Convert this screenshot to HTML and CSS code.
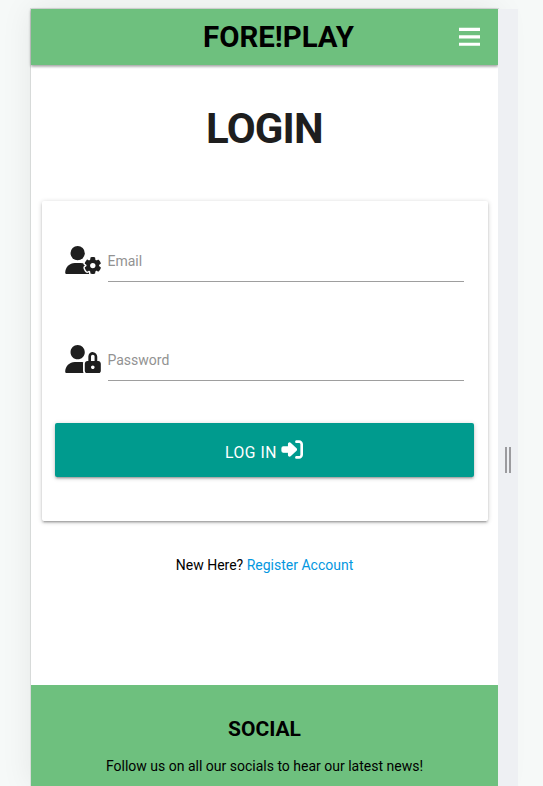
FILE: index.html
```html
<!DOCTYPE html>
<html lang="en">
<head>
<meta charset="utf-8">
<title>FORE!PLAY</title>
<link rel="stylesheet" href="styles.css">
</head>
<body>
<div class="device">
  <div class="screen">
    <header class="navbar">
      <span class="brand">FORE!PLAY</span>
      <svg class="menu" viewBox="0 0 448 512"><path d="M0 61h448v66H0zM0 220h448v66H0zM0 379h448v66H0z"/></svg>
    </header>
    <main>
      <h1>LOGIN</h1>
      <form class="card">
        <label class="field">
          <svg class="icon" viewBox="0 0 640 512">
            <circle cx="224" cy="128" r="128"/>
            <path d="M274.7 304H173.3C77.6 304 0 381.7 0 477.4 0 496.5 15.5 512 34.7 512H413c12 0 22-4 29-12V400L360 325C335 311 305 304 274.7 304z"/>
            <path class="gear" transform="translate(16)" d="M436 218.2c0-7 4.5-13.3 11.3-14.8c10.5-2.4 21.5-3.7 32.7-3.7s22.2 1.3 32.7 3.7c6.8 1.5 11.3 7.8 11.3 14.8v17.7c0 7.8 4.8 14.8 11.6 18.7c6.8 3.9 15.1 4.5 21.8 .6l13.8-7.9c6.1-3.5 13.7-2.7 18.5 2.4c7.6 8.1 14.3 17.2 20.1 27.2s10.3 20.4 13.5 31c2.1 6.7-1.1 13.7-7.2 17.2l-14.4 8.3c-6.5 3.7-10 10.9-10 18.4s3.5 14.7 10 18.4l14.4 8.3c6.1 3.5 9.2 10.5 7.2 17.2c-3.3 10.6-7.8 21-13.5 31s-12.5 19.1-20.1 27.2c-4.8 5.1-12.5 5.9-18.5 2.4l-13.8-7.9c-6.7-3.9-15.1-3.3-21.8 .6c-6.8 3.9-11.6 10.9-11.6 18.7v17.7c0 7-4.5 13.3-11.3 14.8c-10.5 2.4-21.5 3.7-32.7 3.7s-22.2-1.3-32.7-3.7c-6.8-1.5-11.3-7.8-11.3-14.8V467.3c0-7.8-4.8-14.8-11.6-18.7c-6.7-3.9-15.1-4.5-21.8-.6l-13.8 7.9c-6.1 3.5-13.7 2.7-18.5-2.4c-7.6-8.1-14.3-17.2-20.1-27.2s-10.3-20.4-13.5-31c-2.1-6.7 1.1-13.7 7.2-17.2l14.4-8.3c6.5-3.7 10-10.9 10-18.4s-3.5-14.7-10-18.4l-14.4-8.3c-6.1-3.5-9.2-10.5-7.2-17.2c3.3-10.6 7.7-21 13.5-31s12.5-19.1 20.1-27.2c4.8-5.1 12.4-5.9 18.5-2.4l13.8 7.9c6.8 3.9 15.1 3.3 21.8-.6c6.8-3.9 11.6-10.9 11.6-18.7V218.2z"/>
            <circle class="hole" cx="496" cy="352" r="48"/>
          </svg>
          <input type="text" placeholder="Email">
        </label>
        <label class="field">
          <svg class="icon" viewBox="0 0 640 512"><path d="M592 288H576V212.7c0-41.8-30.1-80.2-71.6-84.4C456.5 123.6 416 161.1 416 208V288h-16C373.6 288 352 309.6 352 336v128c0 26.4 21.6 48 48 48h192c26.4 0 48-21.6 48-48v-128C640 309.6 618.4 288 592 288zM496 432c-17.62 0-32-14.38-32-32s14.38-32 32-32s32 14.38 32 32S513.6 432 496 432zM528 288h-64V208c0-17.62 14.38-32 32-32s32 14.38 32 32V288z"/><path d="M224 256c70.7 0 128-57.31 128-128S294.7 0 224 0S96 57.31 96 128S153.3 256 224 256zM320 336c0-8.672 1.738-16.87 4.303-24.7C308.6 306.6 291.9 304 274.7 304H173.3C77.61 304 0 381.7 0 477.4C0 496.5 15.52 512 34.66 512h301.7C326.3 498.6 320 482.1 320 464V336z"/></svg>
          <input type="password" placeholder="Password">
        </label>
        <button class="submit" type="button"><span>LOG IN</span>
          <svg viewBox="0 0 512 512"><path class="arrow" d="M344.7 238.5l-144.1-136C193.7 95.97 183.4 94.17 174.6 97.95C165.8 101.8 160.1 110.4 160.1 120V192H32.02C14.33 192 0 206.3 0 224v64c0 17.68 14.33 32 32.02 32h128.1v72c0 9.578 5.707 18.25 14.51 22.05c8.803 3.781 19.03 1.984 26-4.594l144.1-136C354.3 264.4 354.3 247.6 344.7 238.5z"/><path d="M416 32h-64c-17.67 0-32 14.33-32 32s14.33 32 32 32h64c17.67 0 32 14.33 32 32v256c0 17.67-14.33 32-32 32h-64c-17.67 0-32 14.33-32 32s14.33 32 32 32h64c53.02 0 96-42.98 96-96V128C512 74.98 469 32 416 32z"/></svg>
        </button>
      </form>
      <p class="register">New Here? <a>Register Account</a></p>
    </main>
    <footer>
      <h2>SOCIAL</h2>
      <p>Follow us on all our socials to hear our latest news!</p>
    </footer>
  </div>
  <div class="resizer"><i></i><i></i></div>
</div>
</body>
</html>
```
FILE: styles.css
```css
* { box-sizing: border-box; }
body {
  margin: 0;
  height: 786px;
  overflow: hidden;
  background: #f6f9f8;
  font-family: Roboto, sans-serif;
  font-size: 14px;
  color: #000;
}
.device { display: flex; height: 786px; padding: 9px 0 0 31px; }
.screen {
  display: flex;
  flex-direction: column;
  width: 467px;
  background: #fff;
  box-shadow: 0 0 0 1px rgba(0,0,0,.09), 0 0 30px rgba(0,0,0,.08);
}
.navbar {
  display: flex;
  align-items: center;
  justify-content: space-between;
  flex: none;
  height: 56px;
  padding: 0 18px 0 172px;
  background: #6ec07e;
  box-shadow: 0 2px 2px rgba(0,0,0,.14), 0 1px 3px rgba(0,0,0,.3);
}
.brand { font-size: 29.4px; line-height: 56px; font-weight: 700; }
.menu { width: 21px; height: 24px; fill: #fff; }
main { flex: none; height: 620px; padding: 0 11px 0 11px; }
h1 {
  margin: 39px 0 0;
  line-height: 50px;
  font-size: 42px;
  font-weight: 700;
  letter-spacing: -.8px;
  text-align: center;
  color: #1e1e1e;
}
.card {
  height: 320px;
  margin: 47px -1px 0 0;
  padding: 38px 14px 0 13px;
  border-radius: 2px;
  box-shadow: 0 2px 2px rgba(0,0,0,.14), 0 3px 1px -2px rgba(0,0,0,.12), 0 1px 5px rgba(0,0,0,.2);
}
.field { display: flex; height: 43px; margin: 0 10px 56px; }
.icon { flex: none; width: 36px; height: 28.5px; margin: 6.5px 7px 0 0; fill: #1e1e1e; }
.gear { stroke: #fff; stroke-width: 50px; paint-order: stroke; }
.hole { fill: #fff; }
input {
  flex: 1;
  min-width: 0;
  height: 43px;
  padding: 2px 0 0;
  border: 0;
  border-bottom: 1px solid #9e9e9e;
  background: none;
  font: 14px Roboto, sans-serif;
  text-indent: -.5px;
}
input::placeholder { color: #929292; opacity: 1; }
.submit {
  display: flex;
  align-items: center;
  justify-content: center;
  gap: 4px;
  width: 100%;
  height: 54px;
  margin-top: -14px;
  padding: 0;
  border: 0;
  border-radius: 2px;
  background: #009b8e;
  color: #fff;
  font: 15.7px Roboto, sans-serif;
  letter-spacing: .5px;
  box-shadow: 0 2px 2px rgba(0,0,0,.14), 0 3px 1px -2px rgba(0,0,0,.12), 0 1px 5px rgba(0,0,0,.2);
}
.submit span { padding-top: 5px; }
.submit svg { width: 23px; height: 21px; margin-top: -2px; fill: #fff; overflow: visible; }
.arrow { stroke: #fff; stroke-width: 30px; stroke-linejoin: round; }
.register { margin: 34px 0 0; line-height: 21px; text-align: center; }
.register a { color: #0397df; }
footer { flex: none; height: 101px; background: #6ec07e; text-align: center; }
h2 { margin: 32px 0 0; font-size: 21px; line-height: 25px; font-weight: 700; }
footer p { margin: 14px 0 0; line-height: 21px; }
.resizer {
  display: flex;
  align-items: center;
  justify-content: center;
  gap: 2px;
  width: 20px;
  background: #eef0f3;
}
.resizer i { width: 2px; height: 26px; margin-top: 124px; background: #9b9b9e; }
```
